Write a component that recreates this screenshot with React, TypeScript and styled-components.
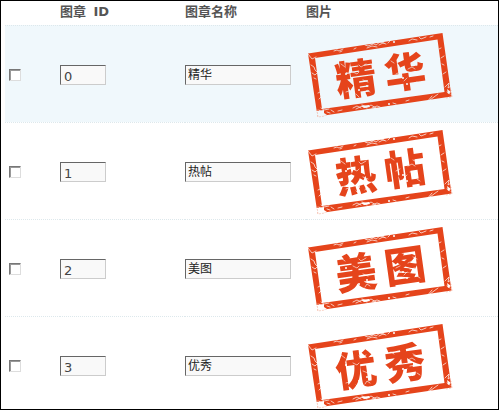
import React, { useId } from 'react';
import styled, { createGlobalStyle } from 'styled-components';

const GlobalStyle = createGlobalStyle`
  * { box-sizing: border-box; }
  body {
    margin: 0;
    background: #fff;
    color: #444;
    font: 12px/16px "DejaVu Sans", "Noto Sans CJK SC", sans-serif;
  }
`;

const Frame = styled.main`
  height: 100vh;
  overflow: hidden;
  padding-left: 4px;
  border: 1px solid #000;
`;

const StampTable = styled.table`
  width: 100%;
  table-layout: fixed;
  border-collapse: separate;
  border-spacing: 0;
`;

const Column = styled.col<{ $width?: number }>`
  width: ${({ $width }) => ($width ? `${$width}px` : 'auto')};
`;

const HeadCell = styled.th`
  height: 24px;
  padding: 0 0 2px;
  color: #555;
  font-size: 13px;
  line-height: 20px;
  font-weight: 700;
  text-align: left;
  white-space: nowrap;
`;

const Latin = styled.span`
  margin-left: 3px;
`;

const Row = styled.tr<{ $active?: boolean }>`
  background: ${({ $active }) => ($active ? '#f0f8fc' : '#fff')};
`;

const Cell = styled.td<{ $inset?: boolean }>`
  height: 97px;
  padding: 2px 0 0 ${({ $inset }) => ($inset ? '4px' : '0')};
  border-top: 1px dotted #dde8ec;
  vertical-align: middle;
`;

const Check = styled.input`
  appearance: none;
  display: block;
  width: 12px;
  height: 12px;
  margin: 0;
  background: #fff;
  border: 1px solid;
  border-color: #777 #ddd #ddd #777;
  box-shadow: inset 1px 1px 0 #999;

  &:checked { background: #777; }
`;

const TextBox = styled.input<{ $width: number; $cjk?: boolean }>`
  display: block;
  width: ${({ $width }) => $width}px;
  height: 20px;
  margin: 0;
  padding: ${({ $cjk }) => ($cjk ? '0 2px 3px' : '2px 3px 0')};
  color: ${({ $cjk }) => ($cjk ? '#222' : '#444')};
  background: #f9f9f9;
  border: 1px solid;
  border-color: #666 #ccc #ccc #666;
  border-radius: 0;
  font: inherit;
  font-size: ${({ $cjk }) => ($cjk ? '12px' : '13px')};
  outline: none;
`;

const Picture = styled.svg`
  display: block;
  width: 160px;
  height: 94px;
  margin-left: -6px;
`;

const StampGlyph = styled.text`
  font-family: "Noto Sans CJK SC", sans-serif;
  font-size: 41px;
  font-weight: 900;
  text-anchor: middle;
`;

function Stamp({ name }: { name: string }) {
  const id = useId().replace(/[^a-zA-Z0-9]/g, '');
  return (
    <Picture viewBox="0 3 160 94" role="img" aria-label={name}>
      <defs>
        <mask id={id} maskUnits="userSpaceOnUse" x="0" y="0" width="160" height="96">
          <rect width="160" height="96" fill="#fff" />
          <g fill="none" stroke="#000" strokeWidth="0.7" strokeLinecap="round">
            <path d="M8 29l4 5 4-2M11 40l3 2 1 3 3 3M12 48l3 2 2-2M14 53l2 1M18 68l2-1M19 74l2-2" />
            <path d="M34 26l3-1 2 1 4-2M40 27l2-1M54 24l2-1M65 20l3 1 5-2M67 23l5-2 5 1M72 18l4 2 4-3 4 1M79 20l4-2 3 1M88 18l2-2M109 16l3-2 5 1M119 12l2 2 5-2M130 12l3-1" />
            <path d="M139 24l2-1M141 33l3-2M142 39l2 1M143 49l3-2M145 62l4-4-1 5 3-2M147 67l3 2M127 77l5-6M130 75l8-6" />
            <path d="M19 85l4 3M21 83l3 2 5-1M27 87l3 1M31 85l3 2M38 86l4-1M53 83l4-2 4 2M56 84l6-3 5 2M62 80l5 2 4-2 5 3M72 83l5-2 3 1M93 78l3 1M106 76l3-1" />
          </g>
          <g fill="none" stroke="#000" strokeWidth="0.6" strokeLinecap="round">
            <path d="M41 39l4 3M53 47l4 2 2-2M59 40l2 2 5-3M63 55l5 2M65 68l2-3 3 2M56 69l3 3M46 67l3-1" />
            <path d="M91 36l3 2M96 49l4-2M104 56l3-3M110 50l5-1M113 38l4 2M117 57l3 2M108 44l4-2 3 2" />
          </g>
          <g fill="#000">
            <path d="M16 86l8-1v3l3 2-9 3zM73 17l7-1 2 1-6 1zM61 81l8-1 1 2-6 1zM147 64l4 3-3 2z" />
            <circle cx="103" cy="53" r="1" /><circle cx="107" cy="59" r="1" /><circle cx="67" cy="61" r="1" />
            <circle cx="59" cy="65" r="1" /><circle cx="46" cy="49" r="1" /><circle cx="89" cy="79" r="1" />
            <circle cx="94" cy="17" r="1" />
          </g>
        </mask>
      </defs>
      <g mask={`url(#${id})`} fill="#e5441b">
        <path
          fillRule="evenodd"
          d="M8 28.5L142.5 8 151.5 71.5 17.5 91.5zM15 33L22 84 144.5 67 137.5 14.5z"
        />
        <StampGlyph transform="translate(56 54) rotate(-8)" y="15">{name[0]}</StampGlyph>
        <StampGlyph transform="translate(105 47) rotate(-8)" y="15">{name[1]}</StampGlyph>
      </g>
      <path d="M17 84l1 8 7-1M146 73l6-1-1-7" fill="none" stroke="#f0a58c" strokeWidth="0.5" strokeDasharray="2 1" />
    </Picture>
  );
}

const stamps = ['精华', '热帖', '美图', '优秀'];

export default function App() {
  return (
    <>
      <GlobalStyle />
      <Frame>
        <StampTable>
          <colgroup>
            <Column $width={55} />
            <Column $width={125} />
            <Column $width={121} />
            <Column />
          </colgroup>
          <thead>
            <tr>
              <HeadCell aria-label="选择" />
              <HeadCell scope="col">图章 <Latin>ID</Latin></HeadCell>
              <HeadCell scope="col">图章名称</HeadCell>
              <HeadCell scope="col">图片</HeadCell>
            </tr>
          </thead>
          <tbody>
            {stamps.map((name, index) => (
              <Row key={name} $active={index === 0}>
                <Cell $inset><Check type="checkbox" aria-label={name} /></Cell>
                <Cell><TextBox $width={46} aria-label="图章 ID" defaultValue={String(index)} /></Cell>
                <Cell><TextBox $width={106} $cjk aria-label="图章名称" defaultValue={name} /></Cell>
                <Cell><Stamp name={name} /></Cell>
              </Row>
            ))}
          </tbody>
        </StampTable>
      </Frame>
    </>
  );
}
